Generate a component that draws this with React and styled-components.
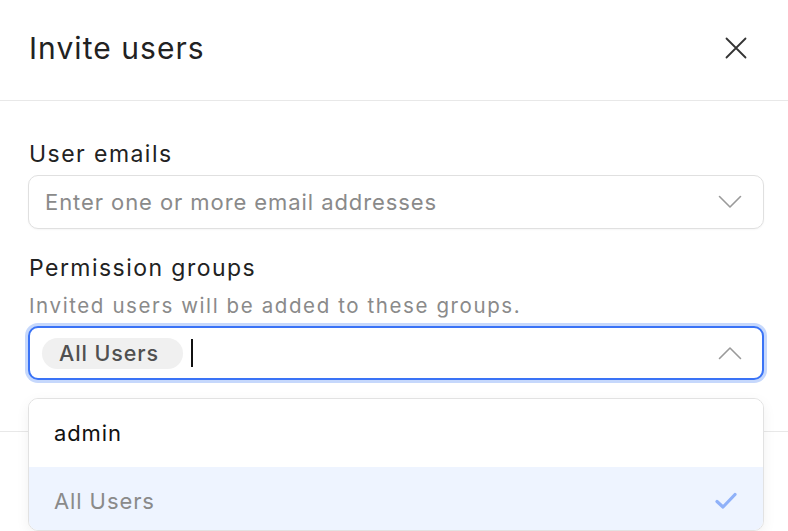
import React from "react";
import styled, { createGlobalStyle } from "styled-components";

const Global = createGlobalStyle`
  html, body { margin: 0; padding: 0; background: #fff; overflow: hidden; }
  body { font-family: Inter, "Noto Sans", sans-serif; color: #222; -webkit-font-smoothing: antialiased; }
  * { box-sizing: border-box; }
`;

const Dialog = styled.div`
  width: 788px;
  height: 531px;
  background: #fff;
  display: flex;
  flex-direction: column;
`;

const Header = styled.div`
  height: 101px;
  display: flex;
  align-items: center;
  justify-content: space-between;
  padding: 0 29px 5px 29px;
  border-bottom: 1.5px solid #e8e8e8;
`;

const Title = styled.h1`
  margin: 0;
  font-size: 30px;
  font-weight: 400;
  color: #222;
  letter-spacing: 1.05px;
`;

const CloseButton = styled.button`
  border: 0;
  background: none;
  padding: 0;
  width: 24px;
  height: 24px;
  margin-right: 11px;
  display: flex;
  align-items: center;
  justify-content: center;
  cursor: pointer;
`;

const Body = styled.div`
  padding: 39px 24px 0 28px;
  height: 331px;
  display: flex;
  flex-direction: column;
  border-bottom: 1.5px solid #e8e8e8;
`;

const Label = styled.div`
  font-size: 23px;
  line-height: 28px;
  color: #222;
  letter-spacing: 1.45px;
  margin-left: 1px;
  margin-bottom: ${(p) => p.$mb || 7}px;
  margin-top: ${(p) => p.$mt || 0}px;
`;

const Help = styled.div`
  font-size: 20.5px;
  line-height: 26px;
  color: #8a8a8a;
  letter-spacing: 1.6px;
  margin-left: 1px;
  margin-bottom: 7px;
`;

const Field = styled.div`
  position: relative;
  height: 54px;
  border-radius: 10px;
  border: ${(p) => (p.$focused ? "2px solid #3a73f6" : "1.5px solid #e0e0e0")};
  box-shadow: ${(p) => (p.$focused ? "0 0 0 3px #c6d8fc" : "0 1px 2px rgba(0,0,0,0.04)")};
  display: flex;
  align-items: center;
  padding: ${(p) => (p.$focused ? "0 20px 0 12px" : "0 21px 0 16px")};
  background: #fff;
`;

const Placeholder = styled.div`
  flex: 1;
  font-size: 22px;
  letter-spacing: 0.92px;
  color: #8a8a8a;
`;

const Tag = styled.span`
  display: inline-flex;
  align-items: center;
  height: 31px;
  padding: 0 24px 0 17px;
  border-radius: 16px;
  background: #f0f0f0;
  font-size: 21.5px;
  font-weight: 500;
  letter-spacing: 0.9px;
  color: #505050;
`;

const Caret = styled.span`
  display: inline-block;
  width: 2px;
  height: 28px;
  background: #111;
  margin-left: 8px;
`;

const Spacer = styled.div`
  flex: 1;
`;

const Menu = styled.div`
  position: absolute;
  top: 70px;
  left: -2px;
  right: -2px;
  height: 133px;
  border: 1.5px solid #e2e2e2;
  border-radius: 10px;
  background: #fff;
  box-shadow: 0 4px 14px rgba(0, 0, 0, 0.06);
  overflow: hidden;
  z-index: 10;
`;

const Option = styled.div`
  height: 68px;
  display: flex;
  align-items: center;
  justify-content: space-between;
  padding: 0 26px 0 25px;
  font-size: 22px;
  letter-spacing: 0.9px;
  color: ${(p) => (p.$selected ? "#8a8a8a" : "#111")};
  background: ${(p) => (p.$selected ? "#eef4ff" : "#fff")};
`;

const Footer = styled.div`
  flex: 1;
`;

const Chevron = ({ up }) => (
  <svg width="24" height="14" viewBox="0 0 24 14" fill="none">
    <path
      d={up ? "M1.5 12.5 L12 2 L22.5 12.5" : "M1.5 1.5 L12 12 L22.5 1.5"}
      stroke="#9a9a9a"
      strokeWidth="1.6"
      strokeLinecap="round"
      strokeLinejoin="round"
    />
  </svg>
);

const XIcon = () => (
  <svg width="22" height="22" viewBox="0 0 22 22" fill="none">
    <path d="M1.5 1.5 L20.5 20.5 M20.5 1.5 L1.5 20.5" stroke="#333" strokeWidth="1.8" strokeLinecap="round" />
  </svg>
);

const Check = () => (
  <svg width="22" height="18" viewBox="0 0 22 18" fill="none">
    <path d="M2 9.5 L8 15 L20 2.5" stroke="#8fb1f9" strokeWidth="3.2" strokeLinecap="round" strokeLinejoin="round" />
  </svg>
);

export default function App() {
  return (
    <>
      <Global />
      <Dialog>
        <Header>
          <Title>Invite users</Title>
          <CloseButton aria-label="Close">
            <XIcon />
          </CloseButton>
        </Header>
        <Body>
          <Label>User emails</Label>
          <Field>
            <Placeholder>Enter one or more email addresses</Placeholder>
            <Chevron />
          </Field>
          <Label $mt={25} $mb={11}>Permission groups</Label>
          <Help>Invited users will be added to these groups.</Help>
          <Field $focused>
            <Tag>All Users</Tag>
            <Caret />
            <Spacer />
            <Chevron up />
            <Menu>
              <Option>admin</Option>
              <Option $selected>
                All Users
                <Check />
              </Option>
            </Menu>
          </Field>
        </Body>
        <Footer />
      </Dialog>
    </>
  );
}
